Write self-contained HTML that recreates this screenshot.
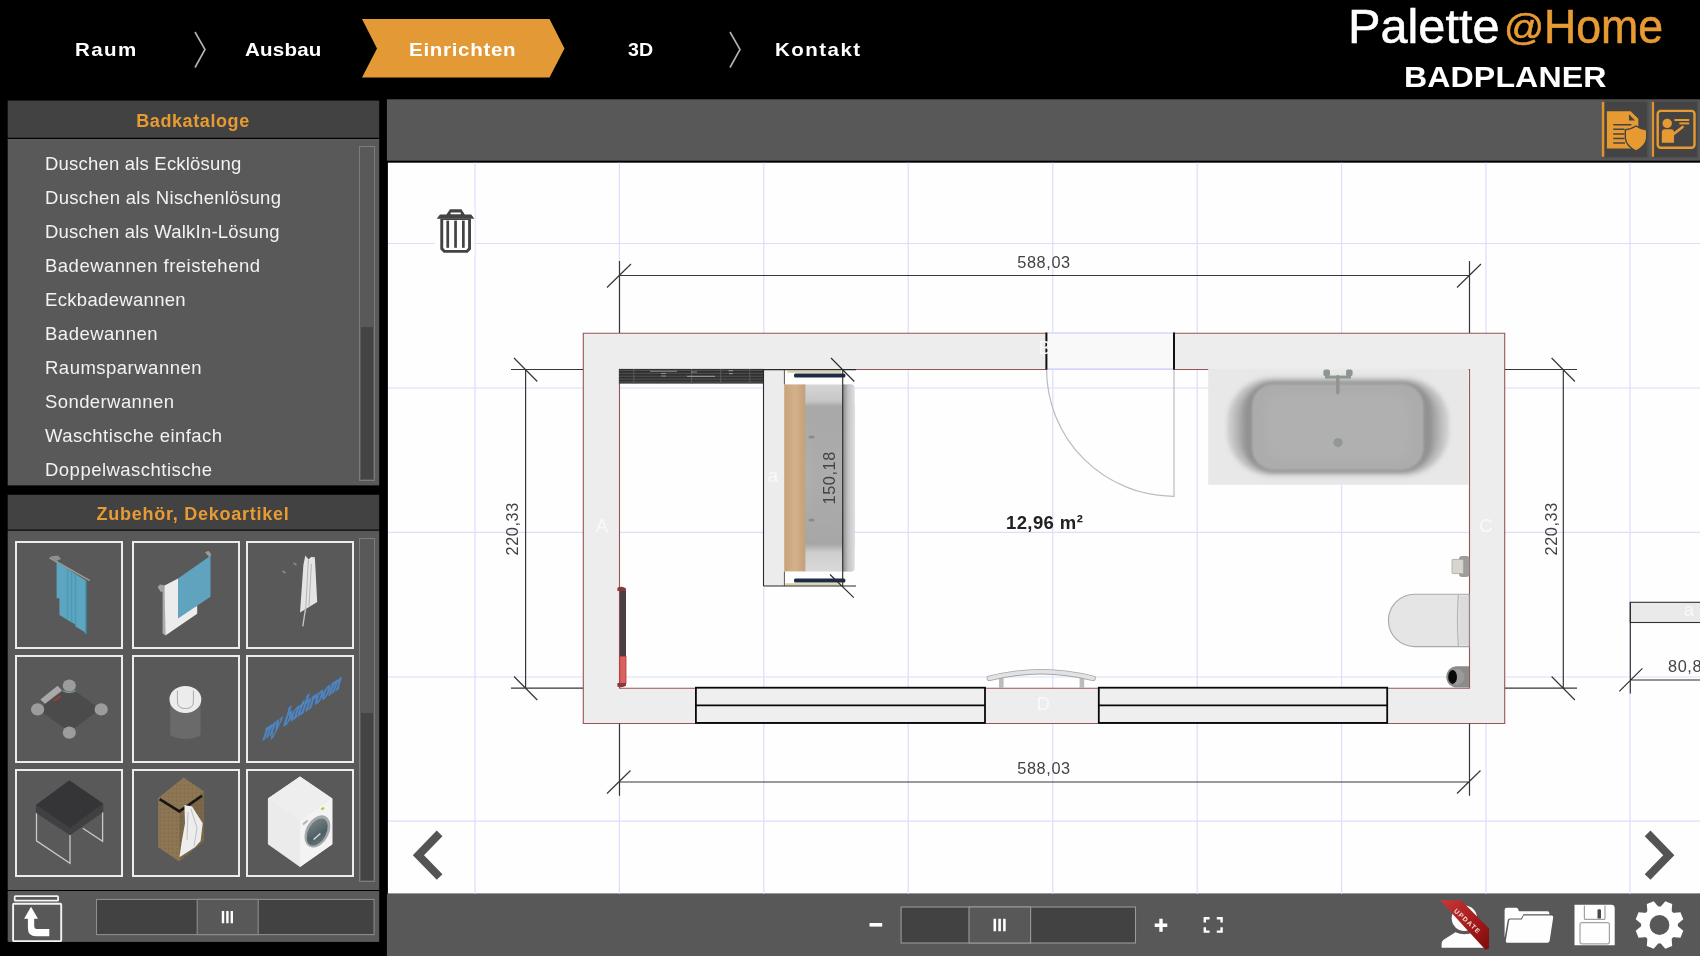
<!DOCTYPE html>
<html lang="de">
<head>
<meta charset="utf-8">
<title>Palette@Home Badplaner</title>
<style>
*{box-sizing:border-box;margin:0;padding:0}
html,body{width:1700px;height:956px;overflow:hidden;background:#000}
body{position:relative;font-family:"Liberation Sans",sans-serif;color:#fff}
.abs{position:absolute}
#nav,#logo,#left,#main{opacity:.999}
/* top nav */
.nav{position:absolute;top:0;height:99px;font-weight:bold;font-size:19px;letter-spacing:.6px;text-align:center;line-height:99px;color:#fff;white-space:nowrap}
/* left panels */
.phead{position:absolute;left:7px;width:372px;color:#e89b33;font-weight:bold;font-size:18px;text-align:center;white-space:nowrap}
.pbody{position:absolute;left:7px;width:372px;background:#595959}
.li{position:absolute;left:45px;font-size:18.5px;color:#f2f2f2;white-space:nowrap;line-height:22px;transform-origin:0 50%}
.tile{position:absolute;width:108px;height:108px;border:2px solid #ececec;background:#595959;overflow:hidden}
.sb{position:absolute;border:1px solid #7c7c7c;background:#595959}
.dim{font-size:15px;fill:#333;font-family:"Liberation Sans",sans-serif}
</style>
</head>
<body>
<div id="nav">
<svg class="abs" style="left:0;top:0" width="920" height="99" viewBox="0 0 920 99">
<polygon points="362,19 549.5,19 564.5,48.5 549.5,77.5 362,77.5 377,48.5" fill="#e39a36"/>
<polyline points="195,32 205,49.5 195,67.5" fill="none" stroke="#b4b4b4" stroke-width="1.6"/>
<polyline points="730,32 740,49.5 730,67.5" fill="none" stroke="#b4b4b4" stroke-width="1.6"/>
</svg>
<div class="nav" id="n1" style="left:75px;letter-spacing:1.3px;transform-origin:0 50%;transform:scaleX(1.08)">Raum</div>
<div class="nav" id="n2" style="left:245px;letter-spacing:.2px;transform-origin:0 50%;transform:scaleX(1.08)">Ausbau</div>
<div class="nav" id="n3" style="left:409px;letter-spacing:.65px;transform-origin:0 50%;transform:scaleX(1.08)">Einrichten</div>
<div class="nav" id="n4" style="left:628px;letter-spacing:0px;transform-origin:0 50%;transform:scaleX(1.03)">3D</div>
<div class="nav" id="n5" style="left:775px;letter-spacing:1.35px;transform-origin:0 50%;transform:scaleX(1.08)">Kontakt</div>
</div>
<!-- LOGO -->
<div id="logo">
<div class="abs" id="lg1" style="left:1348px;top:0px;font-size:47.5px;line-height:54px;color:#fff;-webkit-text-stroke:.55px #fff;white-space:nowrap;transform-origin:0 0;transform:scaleX(1.025)">Palette</div>
<div class="abs" id="lg2a" style="left:1504px;top:7px;font-size:36px;line-height:42px;color:#e89b33;-webkit-text-stroke:.55px #e89b33;white-space:nowrap;transform-origin:0 0;transform:scaleX(1.1)">@</div>
<div class="abs" id="lg2" style="left:1544px;top:0px;font-size:47.5px;line-height:54px;color:#e89b33;-webkit-text-stroke:.55px #e89b33;white-space:nowrap;transform-origin:0 0;transform:scaleX(.94)">Home</div>
<div class="abs" id="lg3" style="left:1404px;top:60px;font-size:30px;line-height:33px;font-weight:bold;letter-spacing:.1px;color:#fff;white-space:nowrap;transform-origin:0 0;transform:scaleX(1.07)">BADPLANER</div>
</div>
<!-- LEFT -->
<div id="left">
<svg class="abs" style="left:0;top:95px" width="392" height="861" viewBox="0 95 392 861">
<rect x="7.7" y="100.6" width="371.5" height="37.2" fill="#424242"/>
<rect x="7.7" y="139" width="371.5" height="346.4" fill="#595959"/>
<rect x="7.7" y="139" width="371.5" height="1" fill="#5e5e5e"/>
<rect x="7.7" y="494.75" width="371.5" height="34.85" fill="#424242"/>
<rect x="7.7" y="530.7" width="371.5" height="359.3" fill="#595959"/>
<rect x="7.7" y="891" width="371.5" height="50.9" fill="#595959"/>
</svg>
<div class="phead" id="h1" style="top:100px;height:38px;line-height:43.5px;letter-spacing:.6px">Badkataloge</div>
<div class="li" id="l0" style="top:152.5px;letter-spacing:0.2px">Duschen als Ecklösung</div>
<div class="li" id="l1" style="top:186.6px;letter-spacing:0.32px">Duschen als Nischenlösung</div>
<div class="li" id="l2" style="top:220.6px;letter-spacing:0.2px">Duschen als WalkIn-Lösung</div>
<div class="li" id="l3" style="top:254.7px;letter-spacing:0.49px">Badewannen freistehend</div>
<div class="li" id="l4" style="top:288.8px;letter-spacing:0.32px">Eckbadewannen</div>
<div class="li" id="l5" style="top:322.8px;letter-spacing:0.5px">Badewannen</div>
<div class="li" id="l6" style="top:356.9px;letter-spacing:0.49px">Raumsparwannen</div>
<div class="li" id="l7" style="top:391.0px;letter-spacing:0.41px">Sonderwannen</div>
<div class="li" id="l8" style="top:425.1px;letter-spacing:0.45px">Waschtische einfach</div>
<div class="li" id="l9" style="top:459.1px;letter-spacing:0.48px">Doppelwaschtische</div>

<div class="sb" style="left:359px;top:146px;width:16px;height:335px"></div>
<div class="abs" style="left:361px;top:327px;width:12px;height:152px;background:#444"></div>
<div class="phead" id="h2" style="top:495px;height:35px;line-height:38px;letter-spacing:.75px">Zubehör, Dekoartikel</div>
<div class="tile" id="t0" style="left:15px;top:541px"></div>
<div class="tile" id="t1" style="left:132px;top:541px"></div>
<div class="tile" id="t2" style="left:246px;top:541px"></div>
<div class="tile" id="t3" style="left:15px;top:655px"></div>
<div class="tile" id="t4" style="left:132px;top:655px"></div>
<div class="tile" id="t5" style="left:246px;top:655px"></div>
<div class="tile" id="t6" style="left:15px;top:769px"></div>
<div class="tile" id="t7" style="left:132px;top:769px"></div>
<div class="tile" id="t8" style="left:246px;top:769px"></div>

<div class="sb" style="left:359px;top:538px;width:16px;height:344px"></div>
<div class="abs" style="left:361px;top:713px;width:12px;height:167px;background:#444"></div>
</div>
<svg class="abs" style="left:7px;top:531px" width="372" height="358" viewBox="7 531 372 358" font-family="Liberation Serif, serif">
<defs>
<filter id="tb" x="-20%" y="-20%" width="140%" height="140%"><feGaussianBlur stdDeviation=".5"/></filter>
<filter id="tb2" x="-20%" y="-20%" width="140%" height="140%"><feGaussianBlur stdDeviation=".9"/></filter>
<pattern id="cork" width="4" height="4" patternUnits="userSpaceOnUse"><rect width="4" height="4" fill="#8b7452"/><rect x="0" y="0" width="1.4" height="1.4" fill="#836d4c"/><rect x="2" y="2.2" width="1.4" height="1.4" fill="#927a57"/></pattern>
<linearGradient id="gDoor" x1="0" y1="0" x2="1" y2="1"><stop offset="0" stop-color="#7c8a8c"/><stop offset=".6" stop-color="#4f5f63"/><stop offset="1" stop-color="#6d7b7e"/></linearGradient>
</defs>
<g filter="url(#tb)">
<!-- t1 blue towel on rail -->
<path d="M49.5 557.8L89.8 580.6" stroke="#9a9a96" stroke-width="1.6"/>
<path d="M50.4 556.6L58 555.4L61 559L54.6 561.8Z" fill="#8f8f8b"/>
<path d="M56.6 562.1L86.9 581.2V633.4H84.6V632L75.6 626.4V624.6L71.4 622.2L59.4 615V598.2H56.6Z" fill="#5ba6c1"/>
<path d="M71.6 572V622M75.4 574.4V626M67.6 569.2V619.6" stroke="#4c93ae" stroke-width="1.4" opacity=".7"/>
<path d="M86.2 581V633" stroke="#3d7c95" stroke-width="1.4"/>
<!-- t2 white + blue towel -->
<path d="M157.6 587L160 584.6L165 585.6V591.6L160.6 591.8Z" fill="#a3a39f"/>
<path d="M205 552.2L208.6 550.8L211.4 554.4L209.6 557.4Z" fill="#9a9a96"/>
<path d="M162.6 590V633.6L165.4 635.6V591Z" fill="#aaa"/>
<path d="M164.6 585.4L178 578.4V613L197.2 605.8V613.8L165.4 635.6Z" fill="#ececec"/>
<path d="M178 578.4L210.5 555.8V596.8L178 618.6Z" fill="#60a3bf"/>
<!-- t3 bathrobe -->
<path d="M305.3 555.4L308.6 559.6L311 557L314.8 557.2L315.4 567.4L317.2 602L306.6 608.6L300 612.6L303.4 565Z" fill="#e4e4e4"/>
<path d="M308.4 560L305.6 612M311.4 564L309 606" stroke="#b4b4b4" stroke-width="1" fill="none"/>
<path d="M305.3 610L302.8 626.4" stroke="#c9c9c9" stroke-width="1.3"/>
<path d="M282.6 571L285.6 573M293.6 563L296.6 565.2" stroke="#8a8a8a" stroke-width="1.6"/>
<!-- t4 scale -->
<path d="M69.3 686.7L100.4 709.3L69.3 731.9L38.2 709.3Z" fill="#4c4c4c"/>
<g fill="#9c9c9c"><ellipse cx="69.3" cy="685.6" rx="6.6" ry="6.2"/><ellipse cx="37.6" cy="709.4" rx="6.6" ry="6.2"/><ellipse cx="101.2" cy="709.4" rx="6.6" ry="6.2"/><ellipse cx="69.3" cy="732.6" rx="6.6" ry="6.2"/></g>
<path d="M63 690.6Q69 694.4 75.6 690.6" stroke="#7d8e96" stroke-width="1.4" fill="none"/>
<path d="M40.4 699.4L57.6 685.8L62 690.4L45 703.8Z" fill="#a9a9a9"/>
<path d="M54 700.8L60.8 696.4" stroke="#a23a34" stroke-width="2"/>
<!-- t5 bin -->
<path d="M170.2 700V733.4A15.2 5.6 0 0 0 200.6 733.4V700Z" fill="#6b6b6b"/>
<ellipse cx="185.4" cy="699.4" rx="15.9" ry="13.5" fill="#ececec"/>
<path d="M177.4 690.6V702Q177.6 708.6 185.4 708.6Q193.2 708.6 193.4 702V690.6" fill="none" stroke="#aaa" stroke-width="1"/>
<!-- t7 stool -->
<g fill="none" stroke="#c9c9c1" stroke-width="1.3"><path d="M36.5 812V840.8L70 863.4V835"/><path d="M102.6 812V841.4L82.8 828.2"/></g>
<path d="M35.8 804.9L70 828.2L103.2 803.5V812L70 835.3L35.8 812.7Z" fill="#3f3f42"/>
<path d="M69.3 780.2L103.2 803.5L70 828.2L35.8 804.9Z" fill="#353537"/>
<!-- t8 laundry bin -->
<path d="M183.7 777.4L204.1 791.5V841L179.4 861.4L158.2 847.3V797.9Z" fill="url(#cork)"/>
<path d="M179.4 811.3L204.1 791.5V841L179.4 861.4Z" fill="#000" opacity=".12"/>
<path d="M159.6 799.2L179.4 811.4L202 795.8" fill="none" stroke="#121212" stroke-width="2.6"/>
<path d="M184.4 805L192.1 806.4L202.7 823.3L200.6 841L195 847.3L179.4 857.2L181.5 843L185 823.3Z" fill="#ededed"/>
<path d="M191 809L197 828L194 846M188 812L187 840" stroke="#c4c4c4" stroke-width="1.1" fill="none"/>
<!-- t9 washing machine -->
<path d="M300 776.6L332.3 798.5V844.3L300 866.9L267.9 844.3V798.5Z" fill="#ebebeb"/>
<path d="M300 820.6L332.3 798.5V844.3L300 866.9Z" fill="#f3f3f3"/>
<path d="M300 776.6L332.3 798.5L300 820.6L267.9 798.5Z" fill="#eeeeee"/>
<ellipse cx="317.4" cy="831.4" rx="11.4" ry="17.2" transform="rotate(28 317.4 831.4)" fill="#a5a9a9"/>
<ellipse cx="317.2" cy="832" rx="9" ry="14.6" transform="rotate(28 317.2 832)" fill="url(#gDoor)"/>
<path d="M313.6 839.4L320.4 833.4" stroke="#d9e1e1" stroke-width="1.4"/>
<path d="M303 824.4L307.6 820.6" stroke="#b3b3b3" stroke-width="2"/>
<path d="M321.4 809.6L324 807.6" stroke="#a4d23c" stroke-width="2.2"/>
</g>
<!-- t6 lettering -->
<text transform="matrix(.827 -.562 -.37 1.5 262.5 740.5)" font-size="16" font-style="italic" font-weight="bold" fill="#4d86c6" stroke="#4d86c6" stroke-width=".9" textLength="93" lengthAdjust="spacingAndGlyphs" filter="url(#tb)">my bathroom</text>
</svg>
<!-- MAIN -->
<div id="main">
<svg class="abs" style="left:380px;top:95px" width="1320" height="861" viewBox="380 95 1320 861">
<rect x="386.9" y="99.3" width="1314" height="61.4" fill="#595959"/>
<rect x="387.9" y="162.7" width="1313" height="731" fill="#fff"/>
<rect x="386.9" y="893.7" width="1314" height="63" fill="#595959"/>
</svg>
<svg class="abs" style="left:388px;top:162px" width="1312" height="732" viewBox="388 162 1312 732" font-family="Liberation Sans, sans-serif">
<defs>
<linearGradient id="gBasin" x1="0" y1="0" x2="0" y2="1"><stop offset="0" stop-color="#d6d6d6"/><stop offset=".09" stop-color="#c8c8c8"/><stop offset=".12" stop-color="#a9a9a9"/><stop offset=".5" stop-color="#b2b2b2"/><stop offset=".85" stop-color="#a6a6a6"/><stop offset=".9" stop-color="#cfcfcf"/><stop offset="1" stop-color="#dadada"/></linearGradient>
<linearGradient id="gBasinR" x1="0" y1="0" x2="1" y2="0"><stop offset="0" stop-color="#8e8e8e"/><stop offset=".45" stop-color="#c4c4c4"/><stop offset="1" stop-color="#dedede"/></linearGradient>
<linearGradient id="gWood" x1="0" y1="0" x2="1" y2="0"><stop offset="0" stop-color="#c9a27a"/><stop offset=".5" stop-color="#d4b28c"/><stop offset="1" stop-color="#c6a17b"/></linearGradient>
<radialGradient id="gTub" cx=".5" cy=".5" r=".5"><stop offset="0" stop-color="#b4b4b4"/><stop offset=".7" stop-color="#a8a8a8"/><stop offset="1" stop-color="#8c8c8c"/></radialGradient>
<filter id="b2" x="-10%" y="-20%" width="120%" height="140%"><feGaussianBlur stdDeviation="2"/></filter>
<filter id="b4" x="-10%" y="-20%" width="120%" height="140%"><feGaussianBlur stdDeviation="4"/></filter>
<filter id="b1b" x="-10%" y="-10%" width="120%" height="120%"><feGaussianBlur stdDeviation="1.2"/></filter>
<filter id="b1" x="-10%" y="-10%" width="120%" height="120%"><feGaussianBlur stdDeviation=".6"/></filter>
<pattern id="pRad" x="0" y="369.9" width="6" height="2.9" patternUnits="userSpaceOnUse"><rect width="6" height="2.9" fill="#303030"/><rect y="0" width="6" height=".8" fill="#5e5e5e"/></pattern>
<clipPath id="cTub"><rect x="1208.2" y="368.8" width="260.4" height="116"/></clipPath>
</defs>
<!-- grid -->
<g stroke="#dedeff" stroke-width="1.2" id="grid">
<path d="M475 162.7V893.7M619.4 162.7V893.7M763.8 162.7V893.7M908.2 162.7V893.7M1052.8 162.7V893.7M1197.2 162.7V893.7M1341.6 162.7V893.7M1486 162.7V893.7M1630 162.7V893.7"/>
<path d="M388 243.5H1700M388 388H1700M388 532.3H1700M388 677H1700M388 821.1H1700"/>
</g>
<!-- walls -->
<path d="M583.3 333.3H1504.7V723.5H583.3ZM619.5 369.5V688.3H1469.5V369.5Z" fill="#eeeeee" fill-rule="evenodd" stroke="#96565a" stroke-width="1.1"/>
<!-- door opening -->
<rect x="1046.4" y="332" width="127.6" height="38" fill="#fafafa"/>
<path d="M1046.4 333H1174M1046.4 369.2H1174" stroke="#c8c8ff" stroke-width="1.2"/>
<path d="M1046.4 332.5V370M1174 332.5V370" stroke="#111" stroke-width="2"/>
<path d="M1046.6 369.5A127.4 127 0 0 0 1174 496.3V369.5" fill="none" stroke="#bdbdbd" stroke-width="1.2"/>
<!-- windows -->
<g fill="#f0f0f0" stroke="#0a0a0a" stroke-width="1.8">
<rect x="695.9" y="687.7" width="289.1" height="35.2"/><path d="M695.9 705.4H985"/>
<rect x="1098.8" y="687.7" width="288.4" height="35.2"/><path d="M1098.8 705.4H1387.2"/>
</g>
<!-- wall labels -->
<g fill="#fafafa" font-size="18.5" text-anchor="middle">
<text x="601.8" y="532">A</text><text x="1044.6" y="354">B</text><text x="1486" y="532">C</text><text x="1043.3" y="710">D</text>
</g>
<!-- dimension lines -->
<g stroke="#383838" stroke-width="1.2" fill="none">
<path d="M619.5 275.5H1469.5M619.5 261V333M1469.5 261V333M607 287.5L631 264M1457 287.5L1481 264"/>
<path d="M619.5 782H1469.5M619.5 723.5V795.7M1469.5 723.5V795.7M607 793.5L630.5 770.5M1457 793.5L1480.5 770.5"/>
<path d="M525.6 369.5V688.1M511 369.5H583M511 688.1H583M514 358L537.3 381.5M514 676.5L537.3 700"/>
<path d="M1563.3 369.5V688.1M1505 369.5H1577M1505 688.1H1577M1551.6 358L1574.9 381.5M1551.6 676.5L1574.9 700"/>
</g>
<g fill="#444" font-size="16.3" text-anchor="middle" letter-spacing=".6">
<text x="1044" y="267.8">588,03</text>
<text x="1044" y="774.3">588,03</text>
<text transform="translate(518.3 528.8) rotate(-90)">220,33</text>
<text transform="translate(1556.6 528.8) rotate(-90)">220,33</text>
</g>
<text x="1044.6" y="528.5" fill="#222" font-size="18.5" font-weight="bold" text-anchor="middle" letter-spacing=".4">12,96 m²</text>
<!--OBJ-START-->
<!-- radiator strip top-left -->
<rect x="618.9" y="368.9" width="144.6" height="14.7" fill="url(#pRad)"/>
<path d="M633.8 369V383.5M691.6 369V383.5M720.7 369V383.5M749.8 369V383.5" stroke="#5c5c5c" stroke-width="1"/>
<path d="M650 371.2h27M661 373.5h5M661 376h5M691 372h6M687 376.4h16M703 376.4h12M728.6 370.6h4.4M729 373.6h3.6" stroke="#a9a9a4" stroke-width="1.1" opacity=".75"/>
<!-- partition a + vanity -->
<rect x="763.6" y="369.6" width="20.6" height="216.4" fill="#ededed"/>
<rect x="784.2" y="370" width="58.4" height="15" fill="#fff"/><rect x="784.2" y="571.5" width="58.4" height="14.5" fill="#fff"/>
<!-- basin -->
<path d="M805 384.4H851.4Q854.4 384.4 854.4 387.4V568.4Q854.4 571.4 851.4 571.4H805Z" fill="url(#gBasin)"/>
<path d="M843 384.4H851.4Q854.4 384.4 854.4 387.4V568.4Q854.4 571.4 851.4 571.4H843Z" fill="url(#gBasinR)"/>
<rect x="809" y="404" width="33" height="140" fill="#aaa" opacity=".55" filter="url(#b2)"/>
<ellipse cx="811.5" cy="437" rx="3" ry="1.6" fill="#8a8f88"/><ellipse cx="811.5" cy="520" rx="3" ry="1.6" fill="#8a8f88"/>
<rect x="784.2" y="384.4" width="21.2" height="187" fill="url(#gWood)"/>
<!-- small top/bottom profiles -->
<rect x="787.4" y="370.6" width="53.6" height="2.2" fill="#d9d2a8"/><rect x="794" y="373.6" width="51.4" height="4" rx="1.5" fill="#1f2c48"/>
<rect x="785.4" y="583.2" width="55.6" height="2.4" fill="#d9d2a8"/><rect x="794" y="578.6" width="51.4" height="4" rx="1.5" fill="#1f2c48"/>
<path d="M784.4 370V384.4M784.4 571.5V586" stroke="#555" stroke-width="1" fill="none"/>
<g stroke="#2a2a2a" stroke-width="1.1" fill="none">
<path d="M763.5 586V369.6H856M763.5 586H856M842.7 369.6V586M831 358L854.3 381.5M830 574.5L853.8 597.6"/>
</g>
<text transform="translate(835 477.8) rotate(-90)" fill="#444" font-size="16.3" text-anchor="middle" letter-spacing=".6">150,18</text>
<text x="773" y="482" fill="#fafafa" font-size="18.5" text-anchor="middle">a</text>
<!-- bathtub -->
<rect x="1208.2" y="368.8" width="260.4" height="116" fill="#e9e9e9"/>
<g clip-path="url(#cTub)">
<rect x="1227" y="379.5" width="222" height="94.5" rx="42" fill="#cfcfcf" filter="url(#b2)"/>
<rect x="1236" y="381" width="204" height="91.5" rx="36" fill="#a4a4a4" filter="url(#b4)"/>
<rect x="1244" y="382" width="188" height="90" rx="30" fill="#939393" filter="url(#b2)"/>
<rect x="1252" y="384" width="171.5" height="86" rx="22" fill="#adadad" filter="url(#b1b)"/>
<rect x="1266" y="394" width="144" height="66" rx="16" fill="#b1b1b1" filter="url(#b4)"/>
</g>
<circle cx="1338" cy="442.6" r="4.6" fill="#929a93" filter="url(#b1)"/>
<g fill="#8f9890" filter="url(#b1)"><rect x="1336" y="375" width="3.6" height="19.4" rx="1.8"/><rect x="1325" y="375.6" width="26" height="3"/><rect x="1323.4" y="369.6" width="6.6" height="6.6" rx="2"/><rect x="1346" y="369.6" width="6.6" height="6.6" rx="2"/></g>
<!-- toilet -->
<path d="M1469 594.2H1414.6A26.2 26.2 0 0 0 1414.6 646.6H1469Z" fill="#e6e6e6" stroke="#a9a9a9" stroke-width="1.1"/>
<path d="M1458.4 594.5Q1456.6 620 1458.4 646.4" fill="none" stroke="#b5b5b5" stroke-width="1.2"/>
<rect x="1459.5" y="596" width="9" height="49" fill="#dcdcdc"/>
<!-- paper holder -->
<rect x="1459" y="556" width="10.4" height="21" rx="3" fill="#9c9f9c"/><rect x="1452" y="559.4" width="11.4" height="14.2" rx="1" fill="#d9d5cf" stroke="#a7a7a7" stroke-width=".8"/>
<!-- brush -->
<path d="M1469 666.2H1457A10.7 10.7 0 0 0 1457 687.6H1469Z" fill="#8c8c8c"/>
<circle cx="1456.5" cy="676.9" r="8" fill="#9b9b9b"/><ellipse cx="1452.6" cy="676.9" rx="4.4" ry="7" fill="#0a0a0a"/>
<!-- wall radiator -->
<rect x="619.8" y="590.5" width="6.2" height="66" fill="#4a3f47"/><rect x="619.8" y="656.4" width="6.2" height="27" fill="#dc6262" stroke="#b23c3c" stroke-width=".8"/>
<path d="M617.4 587.8Q622 585.6 626 588.4V591H617.4ZM617.4 686.4Q622 688.4 626 685.8V683H617.4Z" fill="#8b3a3a"/>
<!-- grab handle -->
<rect x="999" y="678" width="4.6" height="10" fill="#bdbdbd"/><rect x="1079.6" y="678" width="4.6" height="10" fill="#bdbdbd"/>
<path d="M989.2 678.4Q1041.2 665 1093.2 678.4" fill="none" stroke="#a6a6a6" stroke-width="5.4" stroke-linecap="round"/>
<path d="M989.2 678.4Q1041.2 665 1093.2 678.4" fill="none" stroke="#e3e3e3" stroke-width="3.8" stroke-linecap="round"/>
<!-- right partial object -->
<rect x="1630.3" y="602.3" width="80" height="20.2" fill="#ebebeb" stroke="#333" stroke-width="1.1"/>
<text x="1689" y="615.5" fill="#fafafa" font-size="18.5" text-anchor="middle">a</text>
<path d="M1630.3 602.3V693.5M1630.3 680H1700M1619.3 691.3L1642.4 668.3" stroke="#2a2a2a" stroke-width="1.1" fill="none"/>
<text x="1668" y="671.5" fill="#444" font-size="16.3" letter-spacing=".6">80,80</text>
<!-- trash -->
<rect x="434.5" y="206.5" width="40" height="49.5" fill="#fff"/>
<g fill="#444">
<path d="M436.7 218.8L440 214.4H446.4L450 209.3H461.4L464.8 214.4H471.2L474.4 218.8ZM450.6 212.6H460.8V214.2H450.6Z" fill-rule="evenodd"/>
<path d="M440.3 218.4H471V249.2L467.6 252.8H443.7L440.3 249.2ZM443.2 220V248L445 250H466.3L468.1 248V220Z" fill-rule="evenodd"/>
<rect x="446.4" y="220.6" width="2.7" height="27.2"/><rect x="454.2" y="220.6" width="2.7" height="27.2"/><rect x="462" y="220.6" width="2.7" height="27.2"/>
</g>
<!-- nav arrows -->
<polyline points="439.6,833.4 418.4,855.2 439.6,877" fill="none" stroke="#555" stroke-width="8"/>
<polyline points="1647.6,833.4 1668.8,855.2 1647.6,877" fill="none" stroke="#555" stroke-width="8"/>
<!--OBJ-END-->
</svg>
<svg class="abs" style="left:1596px;top:99px" width="104" height="62" viewBox="1596 99 104 62">
<rect x="1601.8" y="100.4" width="46.8" height="57.8" fill="#505050"/>
<rect x="1604.2" y="101.8" width="42.8" height="55" fill="#454545"/>
<rect x="1601.8" y="101.8" width="2.5" height="55" fill="#e0952f"/>
<rect x="1651.8" y="100.4" width="46.6" height="57.8" fill="#505050"/>
<rect x="1654" y="101.8" width="42.8" height="55" fill="#454545"/>
<rect x="1651.9" y="101.8" width="2.2" height="55" fill="#e0952f"/>
<g fill="#e89b33">
<path d="M1606.9 111.3H1630.6L1638.3 118.8V148.6H1606.9Z"/>
<path d="M1629 114.2V120.4H1635Z" fill="#454545"/>
<path d="M1613.2 124.7H1631.4M1613.2 129.3H1624.4M1613.2 133.9H1624.4M1613.2 138.4H1624.4M1613.2 143H1625" stroke="#454545" stroke-width="1.5" fill="none"/>
<path d="M1636 125.2Q1631 128.6 1624.6 129.2V138Q1625.4 146.4 1636 151.8Q1646.6 146.4 1647.4 138V129.2Q1641 128.6 1636 125.2Z" fill="#454545"/>
<path d="M1636 126.8Q1631.6 129.8 1626 130.4V138Q1626.8 145.4 1636 150.2Q1645.2 145.4 1646 138V130.4Q1640.4 129.8 1636 126.8Z"/>
<rect x="1657.7" y="110.9" width="36.8" height="36.9" rx="3" fill="none" stroke="#e89b33" stroke-width="2.4"/>
<circle cx="1667.2" cy="123.4" r="4.7"/>
<path d="M1661.8 142.8V132.4Q1661.8 129.2 1665 129.2H1671Q1674 129.2 1674 132.4V142.8Z"/>
<path d="M1673 134.6L1682.6 127" stroke="#e89b33" stroke-width="2.6" fill="none" stroke-linecap="round"/>
<rect x="1674.4" y="119" width="14.8" height="2"/><rect x="1679.4" y="122.4" width="9.8" height="2"/>
</g>
</svg>
<svg class="abs" style="left:860px;top:894px" width="840" height="62" viewBox="860 894 840 62" font-family="Liberation Sans, sans-serif">
<rect x="869.5" y="923" width="12.7" height="3.6" fill="#fff"/>
<rect x="901.1" y="907" width="234.4" height="36" fill="#434343" stroke="#9a9a9a" stroke-width="1.1"/>
<rect x="969" y="907" width="61.6" height="36" fill="#595959" stroke="#9a9a9a" stroke-width="1.1"/>
<path d="M994.8 918.8V931.2M999.6 918.8V931.2M1004.4 918.8V931.2" stroke="#fff" stroke-width="2.6"/>
<path d="M1154.7 925.3H1167.3M1161 918.8V931.8" stroke="#fff" stroke-width="3.4"/>
<path d="M1204.8 922.6V918.2H1209.6M1216.8 918.2H1221.6V922.6M1221.6 927.2V931.6H1216.8M1209.6 931.6H1204.8V927.2" stroke="#fff" stroke-width="2.4" fill="none"/>
<!-- user + ribbon -->
<defs><linearGradient id="gRib" x1="0" y1="0" x2="1" y2="1"><stop offset="0" stop-color="#c83a3a"/><stop offset=".55" stop-color="#a81c1c"/><stop offset="1" stop-color="#7e0d0d"/></linearGradient></defs>
<g fill="#fff">
<circle cx="1464.4" cy="918.2" r="12.7"/>
<path d="M1441.6 947.8V943.4Q1441.6 941 1444 939.6L1455.4 932.2Q1464.4 936.4 1473.4 932.2L1483.8 939.6Q1486 941 1486 943.4V947.8Z"/>
</g>
<path d="M1440 900.2H1461L1489 928.6V948.6L1485.4 949.8Z" fill="url(#gRib)"/>
<text transform="translate(1453.6 911.4) rotate(43)" font-size="6.6" font-weight="bold" fill="#f1dcdc" letter-spacing="1.2">UPDATE</text>
<!-- folder -->
<g fill="#fff">
<path d="M1504.6 938V910Q1504.6 907.8 1506.8 907.8H1516Q1517.6 907.8 1518.2 909.2L1519 911.2H1547.4Q1549.4 911.2 1549.4 913.2V914.2H1523.4L1521.2 918.4H1509.6Q1508.2 918.4 1507.8 920Z"/>
<path d="M1510.4 919.6H1521.8L1523.6 915.4H1551.6Q1553.6 915.4 1553.2 917.4L1549.6 941Q1549.2 942.8 1547.4 942.8H1507.2Q1505.4 942.8 1505.8 940.8L1509 921Q1509.2 919.6 1510.4 919.6Z"/>
</g>
<!-- floppy -->
<path d="M1574.5 904.8H1611.4Q1614.7 904.8 1614.7 908.2V945.2H1574.5Z" fill="#fff"/>
<path d="M1584.4 905.4V918.4Q1584.4 919.4 1585.4 919.4H1604Q1605 919.4 1605 918.4V905.4" fill="none" stroke="#a4a4a4" stroke-width="1.2"/>
<rect x="1597.5" y="909.2" width="3.5" height="9.4" rx="1.2" fill="#4a4a4a"/>
<rect x="1580" y="922.6" width="29.4" height="21.2" rx="2" fill="#fff" stroke="#a4a4a4" stroke-width="1.2"/>
<!-- gear -->
<g transform="translate(1659.5 925)" fill="#fff">
<path d="M-3.7 -24.2H3.7L6.4 -16H-6.4Z" transform="rotate(22.5)"/><path d="M-3.7 -24.2H3.7L6.4 -16H-6.4Z" transform="rotate(67.5)"/><path d="M-3.7 -24.2H3.7L6.4 -16H-6.4Z" transform="rotate(112.5)"/><path d="M-3.7 -24.2H3.7L6.4 -16H-6.4Z" transform="rotate(157.5)"/><path d="M-3.7 -24.2H3.7L6.4 -16H-6.4Z" transform="rotate(202.5)"/><path d="M-3.7 -24.2H3.7L6.4 -16H-6.4Z" transform="rotate(247.5)"/><path d="M-3.7 -24.2H3.7L6.4 -16H-6.4Z" transform="rotate(292.5)"/><path d="M-3.7 -24.2H3.7L6.4 -16H-6.4Z" transform="rotate(337.5)"/>
<circle r="18.4"/>
<circle r="9.9" fill="#595959"/>
</g>
</svg>
<!-- left bottom bar -->
<svg class="abs" style="left:7px;top:891px" width="372" height="51" viewBox="7 891 372 51">
<rect x="14.7" y="896.1" width="43.4" height="4.6" rx=".8" fill="none" stroke="#f4f4f4" stroke-width="1.8"/>
<rect x="13.1" y="903.8" width="48.1" height="37.3" rx=".8" fill="#595959" stroke="#f4f4f4" stroke-width="1.9"/>
<path d="M24.1 918.8L31 906.8L38 918.8H34.2V926Q34.2 929.1 37.4 929.1H49.3V936.3H36Q27.9 936.3 27.9 928.2V918.8Z" fill="#fff"/>
<rect x="96.5" y="899.4" width="277.6" height="35.2" fill="#434343" stroke="#8e8e8e" stroke-width="1.1"/>
<rect x="197.2" y="899.4" width="61" height="35.2" fill="#595959" stroke="#8e8e8e" stroke-width="1.1"/>
<path d="M223 911V923.2M227.4 911V923.2M231.8 911V923.2" stroke="#fff" stroke-width="2.4"/>
</svg>
</div>
</body>
</html>
